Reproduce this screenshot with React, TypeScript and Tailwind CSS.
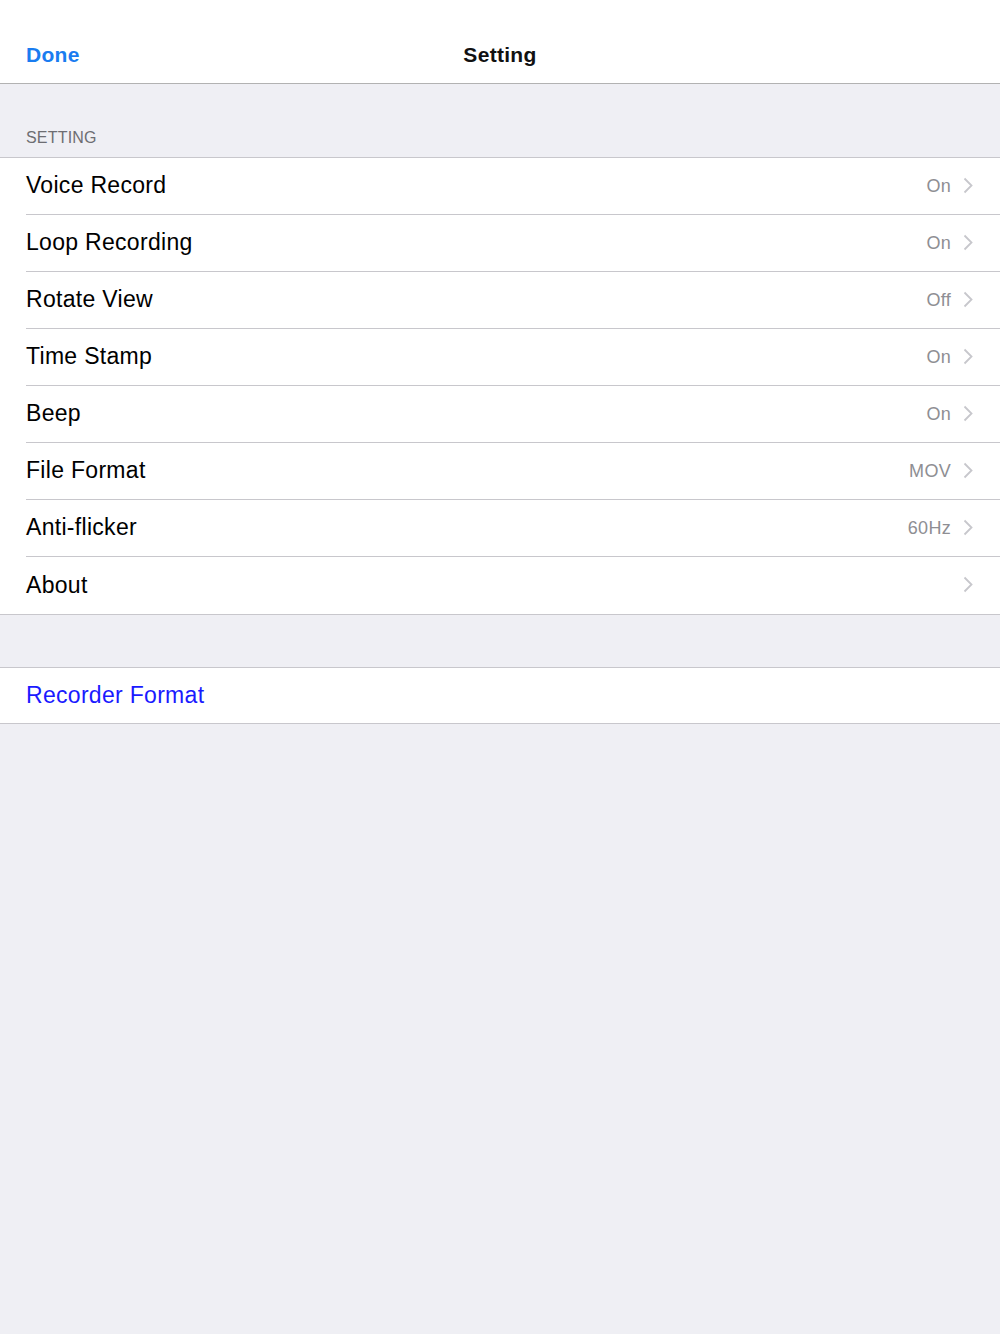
import React from "react";

const rows = [
  { label: "Voice Record", value: "On" },
  { label: "Loop Recording", value: "On" },
  { label: "Rotate View", value: "Off" },
  { label: "Time Stamp", value: "On" },
  { label: "Beep", value: "On" },
  { label: "File Format", value: "MOV" },
  { label: "Anti-flicker", value: "60Hz" },
  { label: "About", value: "" },
];

function Chevron() {
  return (
    <svg width="10" height="17" viewBox="0 0 10 17" className="ml-[12px] mr-[27px] mb-[2px]">
      <path d="M1.5 1.5 L8.5 8.5 L1.5 15.5" fill="none" stroke="#c7c7cc" strokeWidth="1.8" />
    </svg>
  );
}

export default function App() {
  return (
    <div className="min-h-[1334px] bg-[#efeff4] font-['Liberation_Sans',Arial,sans-serif]">
      <header className="relative h-[84px] bg-white border-b border-[#b2b2b2]">
        <span className="absolute left-[26px] top-[39px] text-[21px] font-bold text-[#1a7cf0] tracking-[0.3px]">Done</span>
        <span className="absolute left-0 right-0 top-[39px] text-center text-[21px] font-bold text-[#111] tracking-[0.3px]">Setting</span>
      </header>

      <div className="h-[73px] flex items-end px-[26px] pb-[7px]">
        <span className="text-[16px] text-[#6d6d72] uppercase tracking-[0.2px]">Setting</span>
      </div>

      <div className="bg-white border-y border-[#c8c7cc]">
        {rows.map((r, i) => (
          <div key={r.label} className="pl-[26px]">
            <div
              className={
                "h-[57px] flex items-center " +
                (i < rows.length - 1 ? "border-b border-[#c8c7cc]" : "")
              }
            >
              <span className="flex-1 text-[23px] text-black tracking-[0.3px] pb-[1px]">{r.label}</span>
              <span className="text-[18px] text-[#8e8e93] tracking-[0.3px] pt-[1px]">{r.value}</span>
              <Chevron />
            </div>
          </div>
        ))}
      </div>

      <div className="h-[52px]" />

      <div className="bg-white border-y border-[#c8c7cc] h-[57px] flex items-center px-[26px]">
        <span className="text-[23px] text-[#1a1aff] tracking-[0.3px]">Recorder Format</span>
      </div>
    </div>
  );
}
